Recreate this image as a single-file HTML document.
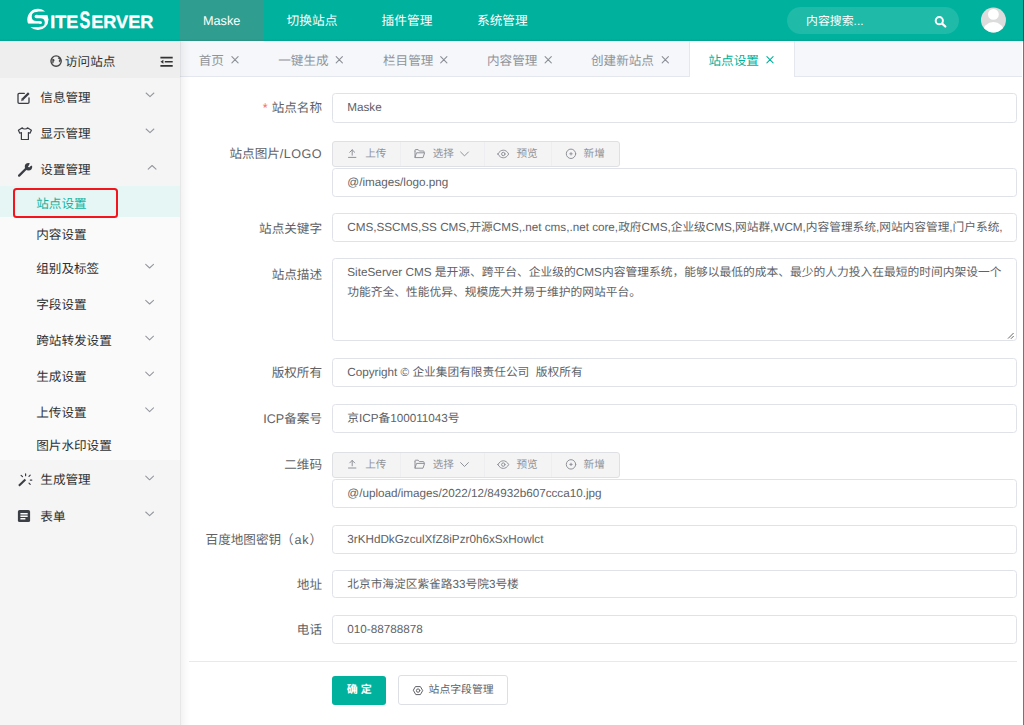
<!DOCTYPE html>
<html lang="zh-CN">
<head>
<meta charset="utf-8">
<title>SiteServer CMS</title>
<style>
*{box-sizing:border-box;margin:0;padding:0}
html,body{width:1024px;height:725px;overflow:hidden;background:#fff}
body{font-family:"Liberation Sans","Noto Sans CJK SC",sans-serif;font-size:12.8px;color:#303133;position:relative;text-rendering:geometricPrecision}
.cj{white-space:nowrap}
.abs{position:absolute}
.t{position:absolute;white-space:nowrap;line-height:16px}
svg.ic{position:absolute;overflow:visible}

/* header */
#hdr{position:absolute;left:0;top:0;width:1024px;height:40.6px;background:#00b19d}
#navact{position:absolute;left:180.3px;top:0;width:84.2px;height:40.6px;background:#2f9d90}
.nav{position:absolute;top:13px;color:#fff;font-size:12.7px;line-height:16px;white-space:nowrap}
#search{position:absolute;left:787px;top:6.5px;width:171.5px;height:27px;border-radius:14px;background:#1fbaa8}

/* sidebar */
#side{position:absolute;left:0;top:40.8px;width:180.3px;height:685px;background:#f5f5f5;}
#visit{position:absolute;left:0;top:0;width:180.3px;height:37px;background:#eeeeee}
#sub{position:absolute;left:0;top:145.5px;width:180.3px;height:274.1px;background:#fafafa}
#cur{position:absolute;left:0;top:145.5px;width:180.3px;height:31px;background:#e5f6f4}
#red{position:absolute;left:12.6px;top:147.3px;width:105.6px;height:30.3px;border:2.8px solid #f5141c;border-radius:3.5px}
.m1{position:absolute;left:40.3px;font-size:12.6px;color:#303133;line-height:16px;white-space:nowrap}
.m2{position:absolute;left:36.2px;font-size:12.6px;color:#303133;line-height:16px;white-space:nowrap}

/* tabs */
#tabs{position:absolute;left:180.3px;top:40.8px;width:841.5px;height:36.2px;background:#f5f7fa;border-bottom:1px solid #e4e7ed}
#tabact{position:absolute;left:509.2px;top:0;width:105.6px;height:36.2px;background:#fff;border-left:1px solid #e4e7ed;border-right:1px solid #e4e7ed}
.tab{position:absolute;top:12px;font-size:12.6px;color:#909399;line-height:16px;white-space:nowrap}
.x{position:absolute;top:14.5px;width:8px;height:8px}

/* form */
.lbl{position:absolute;left:190px;width:132px;text-align:right;font-size:12.6px;color:#606266;line-height:16px;white-space:nowrap}
.inp{position:absolute;left:332.4px;width:684.2px;height:28.8px;border:1px solid #dfe2e9;border-radius:3.5px;background:#fff;font-size:11.7px;color:#606266;line-height:27.6px;padding-left:13.9px;white-space:nowrap;overflow:hidden}
.bg{position:absolute;left:332.4px;height:25.6px;width:288px;background:#f4f4f5;border:1px solid #dfe0e3;border-radius:3px}
.bg .sep{position:absolute;top:0;width:1px;height:24px;background:#eeeef0}
.bg .bt{position:absolute;top:5.2px;font-size:10.6px;color:#909399;line-height:14px;white-space:nowrap}
</style>
</head>
<body>

<!-- ===== header ===== -->
<div id="hdr">
  <div id="navact"></div>
  <div class="abs" style="left:0;top:38.8px;width:1024px;height:1.8px;background:linear-gradient(to bottom,rgba(0,40,30,0),rgba(0,40,30,.10))"></div>
  
  <div class="nav" style="left:203px">Maske</div>
  <div class="nav" style="left:286.6px"><span class="cj">切换站点</span></div>
  <div class="nav" style="left:381.6px"><span class="cj">插件管理</span></div>
  <div class="nav" style="left:477px"><span class="cj">系统管理</span></div>
  <div id="search"></div>
  <div class="nav" style="left:806px;top:12.6px;font-size:11.9px"><span class="cj">内容搜索</span>...</div>
  
</div>

<!-- ===== sidebar ===== -->
<div id="side">
  <div id="visit"></div>
  <div id="sub"></div>
  <div id="cur"></div>
  <div class="m1" style="left:65px;top:13.2px;color:#333"><span class="cj">访问站点</span></div>
  <div class="m1" style="top:49px"><span class="cj">信息管理</span></div>
  <div class="m1" style="top:85px"><span class="cj">显示管理</span></div>
  <div class="m1" style="top:121px"><span class="cj">设置管理</span></div>
  <div class="m2" style="top:155px;color:#14b3a0"><span class="cj">站点设置</span></div>
  <div class="m2" style="top:185.8px"><span class="cj">内容设置</span></div>
  <div class="m2" style="top:220px"><span class="cj">组别及标签</span></div>
  <div class="m2" style="top:256.2px"><span class="cj">字段设置</span></div>
  <div class="m2" style="top:292.2px"><span class="cj">跨站转发设置</span></div>
  <div class="m2" style="top:328.2px"><span class="cj">生成设置</span></div>
  <div class="m2" style="top:364.2px"><span class="cj">上传设置</span></div>
  <div class="m2" style="top:397.4px"><span class="cj">图片水印设置</span></div>
  <div class="m1" style="top:430.9px"><span class="cj">生成管理</span></div>
  <div class="m1" style="top:467.8px"><span class="cj">表单</span></div>
  <div id="red"></div>
  
</div>

<!-- ===== tabs ===== -->
<div id="tabs">
  <div id="tabact"></div>
  <div class="tab" style="left:18.4px"><span class="cj">首页</span></div>
  <div class="tab" style="left:97.9px"><span class="cj">一键生成</span></div>
  <div class="tab" style="left:202.7px"><span class="cj">栏目管理</span></div>
  <div class="tab" style="left:306.7px"><span class="cj">内容管理</span></div>
  <div class="tab" style="left:410.7px"><span class="cj">创建新站点</span></div>
  <div class="tab" style="left:528.2px;color:#00b19d"><span class="cj">站点设置</span></div>
  
</div>

<!-- ===== form ===== -->
<div id="form">
  <div class="lbl" style="top:100.2px"><span style="color:#f56c6c;margin-right:4px">*</span><span class="cj">站点名称</span></div>
  <div class="inp" style="top:93.2px;height:29.4px;line-height:28.9px">Maske</div>

  <div class="lbl" style="top:146.2px"><span class="cj">站点图片</span><span style="letter-spacing:.45px">/LOGO</span></div>
  <div class="bg" style="top:141px;height:26px"><div class="sep" style="left:67px"></div><div class="sep" style="left:150.2px"></div><div class="sep" style="left:218px"></div><div class="bt" style="left:31.8px"><span class="cj">上传</span></div><div class="bt" style="left:99.3px"><span class="cj">选择</span></div><div class="bt" style="left:183px"><span class="cj">预览</span></div><div class="bt" style="left:250.2px"><span class="cj">新增</span></div></div>
  <div class="inp" style="top:168.4px">@/images/logo.png</div>

  <div class="lbl" style="top:221.3px"><span class="cj">站点关键字</span></div>
  <div class="inp" style="top:213.2px">CMS,SSCMS,SS CMS,<span class="cj">开源</span>CMS,.net cms,.net core,<span class="cj">政府</span>CMS,<span class="cj">企业级</span>CMS,<span class="cj">网站群</span>,WCM,<span class="cj">内容管理系统</span>,<span class="cj">网站内容管理</span>,<span class="cj">门户系统</span>,</div>

  <div class="lbl" style="top:266.7px"><span class="cj">站点描述</span></div>
  <div class="inp" style="top:258.3px;height:83.2px;font-size:11.75px;line-height:20px;padding-top:3.6px;padding-right:10px">SiteServer CMS <span class="cj">是开源、跨平台、企业级的</span>CMS<span class="cj">内容管理系统，能够以最低的成本、最少的人力投入在最短的时间内架设一个</span><br><span class="cj">功能齐全、性能优异、规模庞大并易于维护的网站平台。</span></div>

  <div class="lbl" style="top:365.2px"><span class="cj">版权所有</span></div>
  <div class="inp" style="top:358.4px">Copyright © <span class="cj">企业集团有限责任公司</span>&nbsp; <span class="cj">版权所有</span></div>

  <div class="lbl" style="top:410.7px">ICP<span class="cj">备案号</span></div>
  <div class="inp" style="top:403.9px"><span class="cj">京</span>ICP<span class="cj">备</span>100011043<span class="cj">号</span></div>

  <div class="lbl" style="top:456.8px"><span class="cj">二维码</span></div>
  <div class="bg" style="top:452px;height:26px"><div class="sep" style="left:67px"></div><div class="sep" style="left:150.2px"></div><div class="sep" style="left:218px"></div><div class="bt" style="left:31.8px"><span class="cj">上传</span></div><div class="bt" style="left:99.3px"><span class="cj">选择</span></div><div class="bt" style="left:183px"><span class="cj">预览</span></div><div class="bt" style="left:250.2px"><span class="cj">新增</span></div></div>
  <div class="inp" style="top:479.2px">@/upload/images/2022/12/84932b607ccca10.jpg</div>

  <div class="lbl" style="top:531.5px"><span class="cj">百度地图密钥（</span><span style="letter-spacing:.8px;margin-left:.8px">ak</span><span class="cj">）</span></div>
  <div class="inp" style="top:524.8px">3rKHdDkGzculXfZ8iPzr0h6xSxHowlct</div>

  <div class="lbl" style="top:577.2px"><span class="cj">地址</span></div>
  <div class="inp" style="top:569.7px"><span class="cj">北京市海淀区紫雀路</span>33<span class="cj">号院</span>3<span class="cj">号楼</span></div>

  <div class="lbl" style="top:622.4px"><span class="cj">电话</span></div>
  <div class="inp" style="top:615.1px">010-88788878</div>

  <div class="abs" style="left:189px;top:660.6px;width:827.5px;height:1px;background:#e6e9f0"></div>
  <div class="abs" style="left:332.4px;top:676.2px;width:53.6px;height:28.8px;background:#00b19d;border-radius:3px;color:#fff;font-size:11px;line-height:29.4px;text-align:center;font-weight:bold" id="ok"><span class="cj">确</span> <span class="cj">定</span></div>
  <div class="abs" style="left:398.4px;top:675.4px;width:109.6px;height:29.6px;background:#fff;border:1px solid #dcdfe6;border-radius:3px;color:#606266;font-size:10.85px;line-height:28.6px;padding-left:29.2px;white-space:nowrap" id="fld"><span class="cj">站点字段管理</span></div>
</div>

<div class="abs" style="left:180.3px;top:40.8px;width:11px;height:685px;background:linear-gradient(to right,rgba(0,0,0,.055),rgba(0,0,0,.018) 50%,rgba(0,0,0,0))"></div>
<div class="abs" style="left:179.8px;top:40.8px;width:1px;height:685px;background:rgba(0,0,0,.045)"></div>
<svg id="ov" width="1024" height="725" viewBox="0 0 1024 725" style="position:absolute;left:0;top:0;pointer-events:none" fill="none" stroke-linecap="round" stroke-linejoin="round">
<!-- logo -->
<circle cx="37.900" cy="19.450" r="10.600" fill="#fff"/>
<g stroke="#00b19d" stroke-linecap="butt" stroke-linejoin="round">
<path d="M49.500 13.300H36.500C34 13.300 33.100 15 33.100 16.500C33.100 18.300 34.300 19.600 36.500 19.600H40.200C42.400 19.600 43.400 20.900 43.400 22.500C43.400 24.100 42.400 25.400 40.200 25.400H26" stroke-width="2.800"/>
<path d="M49.500 13.300H37.500" stroke-width="3.600"/>
<path d="M39.500 25.400H26" stroke-width="3.600"/>
</g>
<g fill="#fff" stroke="#fff" stroke-width=".35" font-family="Liberation Sans, sans-serif" font-weight="bold">
  <text x="50.300" y="27.700" font-size="17.800" textLength="28" lengthAdjust="spacingAndGlyphs">ITE</text>
  <text x="79.500" y="27.900" font-size="23.600" textLength="10.800" lengthAdjust="spacingAndGlyphs">S</text>
  <text x="91.300" y="27.700" font-size="17.800" textLength="62" lengthAdjust="spacingAndGlyphs">ERVER</text>
</g>
<!-- search icon -->
<circle cx="939.300" cy="20.700" r="3.600" stroke="#fff" stroke-width="2"/>
<path d="M942.200 23.700L945.300 26.500" stroke="#fff" stroke-width="2.300"/>
<!-- avatar -->
<clipPath id="avc"><circle cx="993.450" cy="20" r="12.500"/></clipPath>
<circle cx="993.450" cy="20" r="12.500" fill="#dcdcdc"/>
<g clip-path="url(#avc)" fill="#fff"><circle cx="993.400" cy="14.400" r="5.400"/><ellipse cx="993.400" cy="32.500" rx="10.800" ry="10.400"/></g>

<!-- globe -->
<g stroke="#444">
<circle cx="56.100" cy="61.100" r="5.150" stroke-width="1.350"/>
<path d="M52.300 59.200c1.300-.3 2.300.300 2 1.400-.2.900-1.100.800-.9 1.900.1.700-.5.900-1 .4z" fill="#444" stroke-width=".3"/>
<path d="M58.400 57.400c-.7.700-.1 1.300.6 1.300.8 0 .9.800.3 1.400-.6.600-.2 1.700.5 2.100l1-2.100-.4-1.900z" fill="#444" stroke-width=".3"/>
</g>
<!-- indent/hamburger -->
<g stroke="#333" stroke-width="1.600" stroke-linecap="butt">
<path d="M160.400 57.600H172.700M164.800 61.700H172.700M160.400 65.900H172.700"/>
<path d="M163.400 59.700V63.700L160.500 61.700z" fill="#333" stroke="none"/>
</g>
<!-- edit -->
<g stroke="#3a3d44" stroke-width="1.300">
<path d="M24.300 93.400H19.100a1.100 1.100 0 0 0-1.100 1.100V102.300a1.100 1.100 0 0 0 1.100 1.100H27.900a1.100 1.100 0 0 0 1.100-1.100V97.800"/>
<path d="M22.600 99.300L28.800 93.100" stroke-width="2.200" stroke-linecap="butt"/>
<path d="M21.500 100.400l.4-1.800 1.400 1.400z" fill="#3a3d44" stroke-width=".5"/>
</g>
<!-- shirt -->
<path d="M22.300 127.800L18.400 130.200 19.800 133.200 21.400 132.500V139.500H28.400V132.500L30 133.200 31.400 130.200 27.500 127.800C26.800 129.400 23 129.400 22.300 127.800z" stroke="#3a3d44" stroke-width="1.200"/>
<!-- wrench -->
<g>
<path d="M19.100 175.600L27 167.700" stroke="#3a3d44" stroke-width="2.300"/>
<circle cx="28.500" cy="166.700" r="3.700" fill="#3a3d44"/>
<path d="M28.800 166.400L30.200 161.500 33.800 165z" fill="#f5f5f5"/>
<path d="M28.500 167l2.500-2.600" stroke="#f5f5f5" stroke-width="1.700" stroke-linecap="butt"/>
</g>
<!-- wand -->
<g stroke="#3a3d44">
<path d="M18.900 485.700L25.400 479.500" stroke-width="2.100" stroke-linecap="butt"/>
<path d="M25.600 473.900V475.700M21.100 475.300l1.400 1.400M30.200 475.200l-1.200 1.200M30.300 480.100h1.500M29 483.100l1.200 1.200" stroke-width="1.200"/>
</g>
<!-- form -->
<rect x="17.900" y="510.100" width="12.200" height="12" rx="1.700" fill="#3c3f46"/>
<path d="M20.400 513.700H27.700M20.400 516.200H27.700M20.400 518.700H25.400" stroke="#fafafa" stroke-width="1.450" stroke-linecap="butt"/>

<!-- chevrons -->
<g stroke="#94979d" stroke-width="1.050">
<path d="M146.1 93.0l3.9 3.7 3.9 -3.7"/>
<path d="M146.1 129.0l3.9 3.7 3.9 -3.7"/>
<path d="M148.2 169.2l3.9 -3.7 3.9 3.7"/>
<path d="M145.7 264.3l3.9 3.7 3.9 -3.7"/>
<path d="M145.7 300.3l3.9 3.7 3.9 -3.7"/>
<path d="M145.7 336.2l3.9 3.7 3.9 -3.7"/>
<path d="M145.7 372.1l3.9 3.7 3.9 -3.7"/>
<path d="M145.7 407.9l3.9 3.7 3.9 -3.7"/>
<path d="M145.7 476.1l3.9 3.7 3.9 -3.7"/>
<path d="M145.7 512.0l3.9 3.7 3.9 -3.7"/>
</g>

<!-- tab close marks -->
<g stroke="#8c8f96" stroke-width="1.100">
<path d="M231.9 56.7l6.2 6.2m0 -6.2l-6.2 6.2"/>
<path d="M336.2 56.7l6.2 6.2m0 -6.2l-6.2 6.2"/>
<path d="M440.7 56.7l6.2 6.2m0 -6.2l-6.2 6.2"/>
<path d="M545.1 56.7l6.2 6.2m0 -6.2l-6.2 6.2"/>
<path d="M662.2 56.7l6.2 6.2m0 -6.2l-6.2 6.2"/>
<path d="M766.9 56.7l6.2 6.2m0 -6.2l-6.2 6.2" stroke="#00b19d"/>
</g>

<!-- button group icons (row 1, y offset 0; row 2 reuse) -->
<g id="bi" stroke="#8f9299" stroke-width="1">
<path d="M348.500 157.400H355.900M352.200 155.200V149.900M349.700 152.300l2.500-2.500 2.500 2.500"/>
<path d="M415 151.200V150.200a.6.600 0 0 1 .6-.6H418.200L419.400 151H423.400a.6.600 0 0 1 .6.600V152.500M415 151.200V157.600H423L424.600 152.800H416.500L415 157.400"/>
<path d="M460.600 152l3.900 3.900 3.900-3.900"/>
<path d="M497.900 154C499.400 151.300 501.300 150.200 503.300 150.200S507.200 151.300 508.700 154C507.200 156.700 505.300 157.800 503.300 157.800S499.400 156.700 497.900 154z"/>
<circle cx="503.300" cy="154" r="1.700"/>
<circle cx="571" cy="153.800" r="4.700"/>
<path d="M569.800 153.800h2.400M571 152.600v2.400"/>
</g>
<use href="#bi" y="310.600"/>
<!-- gear -->
<g stroke="#606266" stroke-width="1">
<path d="M415.800 686.600h4.600l2.300 4-2.300 4h-4.600l-2.300-4z" />
<circle cx="418.100" cy="690.600" r="1.700"/>
</g>
<!-- textarea resize grip -->
<path d="M1008.300 338.300l5-5M1011.200 338.500l2.200-2.200" stroke="#555" stroke-width=".9"/>
</svg>

<!-- window edge -->
<div class="abs" style="left:1021.8px;top:40.8px;width:1px;height:685px;background:#fff"></div>
<div class="abs" style="left:1022.5px;top:0;width:1.5px;height:40.6px;background:#1d5a52"></div>
<div class="abs" style="left:1022.5px;top:40.6px;width:1.5px;height:685px;background:#757575"></div>
</body>
</html>
